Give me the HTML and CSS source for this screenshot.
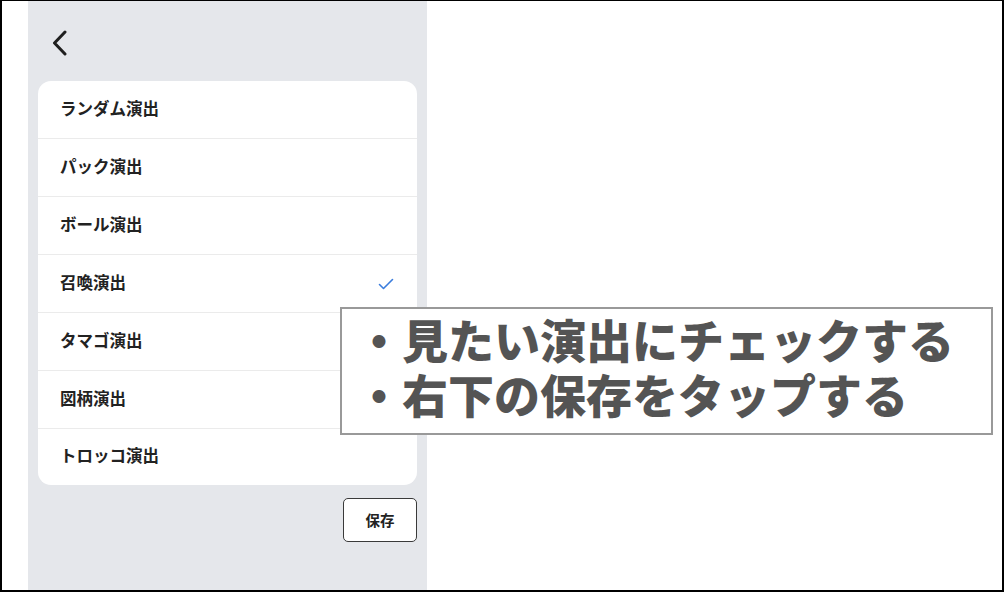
FILE: index.html
```html
<!DOCTYPE html>
<html lang="ja">
<head>
<meta charset="utf-8">
<link rel="stylesheet" href="styles.css">
</head>
<body>
<div class="frame">
  <div class="strip"></div>
  <div class="panel">
    <div class="topbar">
      <svg class="back" width="16" height="26" viewBox="0 0 16 26"><polyline points="13,2 2.5,13 13,24" fill="none" stroke="#1f1f1f" stroke-width="3" stroke-linecap="round" stroke-linejoin="round"/></svg>
    </div>
    <div class="card">
      <div class="row"><span>ランダム演出</span></div>
      <div class="row"><span>パック演出</span></div>
      <div class="row"><span>ボール演出</span></div>
      <div class="row"><span>召喚演出</span><svg class="check" width="16" height="12" viewBox="0 0 16 12"><polyline points="1.5,6.5 5.5,10.5 14.5,1.5" fill="none" stroke="#3b7ddd" stroke-width="1.6" stroke-linecap="round" stroke-linejoin="round"/></svg></div>
      <div class="row"><span>タマゴ演出</span></div>
      <div class="row"><span>図柄演出</span></div>
      <div class="row"><span>トロッコ演出</span></div>
    </div>
    <div class="actions">
      <button class="save">保存</button>
    </div>
  </div>
  <div class="rest"></div>
  <div class="note">
    <p>・見たい演出にチェックする</p>
    <p>・右下の保存をタップする</p>
  </div>
</div>
</body>
</html>
```

FILE: styles.css
```css
* { box-sizing: border-box; }
html, body { margin: 0; padding: 0; background: #fff; }
body { font-family: "Noto Sans CJK JP", "Noto Sans", sans-serif; }
.frame {
  position: relative;
  width: 1004px;
  height: 592px;
  border: 2px solid #000;
  border-top-width: 1px;
  display: flex;
  overflow: hidden;
}
.strip { width: 26px; background: #fff; flex: none; }
.panel {
  width: 399px;
  flex: none;
  background: #e5e7eb;
  padding: 0 10px;
  display: flex;
  flex-direction: column;
}
.rest { flex: 1; background: #fff; }
.topbar {
  height: 80px;
  display: flex;
  align-items: center;
  padding-left: 14px;
  padding-top: 4px;
}
.back { display: block; }
.card {
  background: #fff;
  border-radius: 13px;
  overflow: hidden;
}
.row {
  height: 58px;
  border-bottom: 1px solid #ebebeb;
  display: flex;
  align-items: center;
  justify-content: space-between;
  padding: 0 23px 4px 22px;
  font-size: 16.5px;
  font-weight: 700;
  color: #222;
}
.row:last-child { border-bottom: none; height: 56px; }
.check { display: block; margin-top: 4px; }
.actions {
  display: flex;
  justify-content: flex-end;
  padding-top: 13px;
}
.save {
  width: 74px;
  height: 44px;
  border: 1px solid #3a3a3a;
  border-radius: 5px;
  background: #fff;
  font-family: "Noto Sans CJK JP", sans-serif;
  font-size: 14.5px;
  font-weight: 700;
  color: #222;
  padding: 0 0 2px;
}
.note {
  position: absolute;
  left: 338px;
  top: 306px;
  width: 653px;
  height: 128px;
  background: #fff;
  border: 2px solid #999;
  padding: 2px 0 0 14px;
}
.note p {
  margin: 0;
  font-size: 46px;
  line-height: 55px;
  font-weight: 900;
  color: #545454;
  white-space: nowrap;
}
```
